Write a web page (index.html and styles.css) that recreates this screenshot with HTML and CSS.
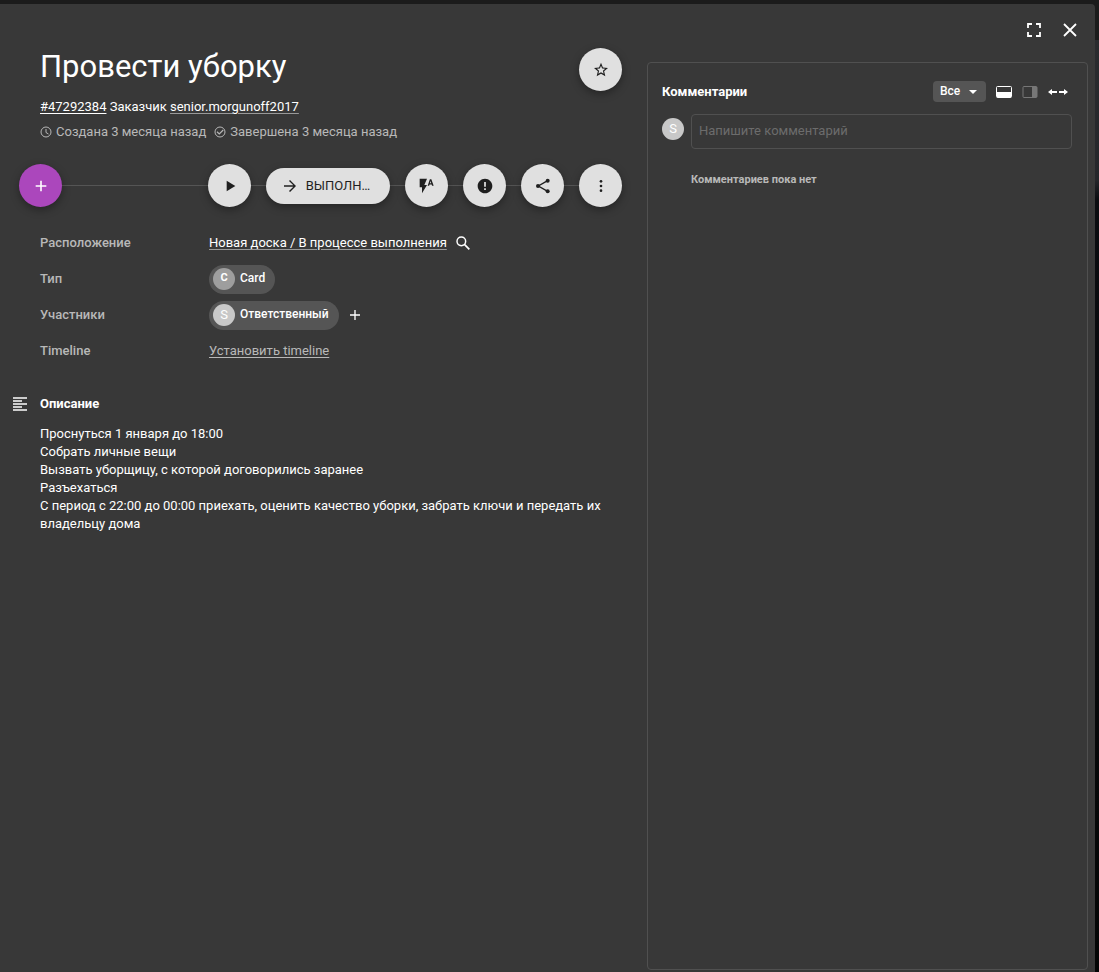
FILE: index.html
```html
<!DOCTYPE html>
<html lang="ru">
<head>
<meta charset="utf-8">
<meta name="viewport" content="width=device-width, initial-scale=1">
<title>Провести уборку</title>
<link rel="stylesheet" href="styles.css">
</head>
<body>
<div class="backdrop">
<div class="dialog" role="dialog" aria-labelledby="card-title">
  <main class="card">
    <header class="card-header">
      <div class="card-heading">
        <h1 class="title" id="card-title">Провести уборку</h1>
        <p class="owner"><a class="link id-link" href="#card">#47292384</a> Заказчик <a class="link" href="#user">senior.morgunoff2017</a></p>
        <p class="dates">
          <span class="date"><svg class="icon-s" viewBox="0 0 24 24"><circle cx="12" cy="12" r="10" fill="none" stroke="currentColor" stroke-width="2"/><path d="M12 6v7l5 3" fill="none" stroke="currentColor" stroke-width="2"/></svg>Создана 3 месяца назад</span>
          <span class="date"><svg class="icon-s" viewBox="0 0 24 24"><circle cx="12" cy="12" r="10" fill="none" stroke="currentColor" stroke-width="2"/><path d="M6 11.500l4.500 4.500L18.500 8" fill="none" stroke="currentColor" stroke-width="2.400"/></svg>Завершена 3 месяца назад</span>
        </p>
      </div>
      <button class="round" type="button" aria-label="В избранное"><svg class="icon" viewBox="0 0 24 24"><path d="M22.500 9l-7.600-.7L12 1.200 9.100 8.300 1.500 9l5.800 5L5.500 21.500 12 17.500l6.500 4L16.700 14 22.500 9zM12 15.200l-3.900 2.400 1-4.500-3.400-3 4.600-.4L12 5.500l1.700 4.200 4.600.4-3.400 3 1 4.500L12 15.200z"/></svg></button>
    </header>

    <div class="actions">
      <button class="round round-add" type="button" aria-label="Добавить"><svg class="icon" viewBox="0 0 24 24"><path d="M20 13.200h-6.800V20h-2.400v-6.800H4v-2.400h6.800V4h2.400v6.800H20z"/></svg></button>
      <span class="spacer"></span>
      <button class="round" type="button" aria-label="Старт"><svg class="icon" viewBox="0 0 24 24"><path d="M7 4v16l13-8z"/></svg></button>
      <button class="pill" type="button"><svg class="icon" viewBox="0 0 24 24"><path d="M12 3l-1.500 1.500L17 11H3v2h14l-6.500 6.500L12 21l9-9z"/></svg><span>Выполн…</span></button>
      <button class="round" type="button" aria-label="Автоматизация"><svg class="icon" viewBox="0 0 24 24"><path d="M1 1v13h3.500v9L12 10.500H8L12 1zm17.500 1h-2.200L13 11.500h2.200l.6-1.900h3.200l.6 1.900H22L18.500 2zm-2.100 5.900l1-3.400 1 3.400h-2z"/></svg></button>
      <button class="round" type="button" aria-label="Заблокировать"><svg class="icon" viewBox="0 0 24 24"><path d="M12 1C5.900 1 1 5.900 1 12s4.900 11 11 11 11-4.900 11-11S18.100 1 12 1zm1.300 17h-2.600v-2.600h2.600V18zm0-5h-2.600V6h2.600v7z"/></svg></button>
      <button class="round" type="button" aria-label="Поделиться"><svg class="icon" viewBox="0 0 24 24"><path d="M19 4L5 12l14 8" fill="none" stroke="currentColor" stroke-width="2"/><circle cx="19" cy="4" r="3"/><circle cx="4.500" cy="12" r="3"/><circle cx="19" cy="20" r="3"/></svg></button>
      <button class="round" type="button" aria-label="Ещё"><svg class="icon" viewBox="0 0 24 24"><circle cx="12" cy="5" r="2"/><circle cx="12" cy="12" r="2"/><circle cx="12" cy="19" r="2"/></svg></button>
    </div>

    <dl class="props">
      <dt>Расположение</dt>
      <dd><a class="link" href="#board">Новая доска / В процессе выполнения</a><button class="plain" type="button" aria-label="Найти на доске"><svg class="icon" viewBox="0 0 24 24"><circle cx="9.500" cy="9.500" r="6.500" fill="none" stroke="currentColor" stroke-width="2.200"/><path d="M14.500 14.500L21.500 21.500" fill="none" stroke="currentColor" stroke-width="2.600"/></svg></button></dd>
      <dt>Тип</dt>
      <dd><button class="chip" type="button"><span class="avatar avatar-type">C</span><span class="chip-text">Card</span></button></dd>
      <dt>Участники</dt>
      <dd><button class="chip" type="button"><span class="avatar">S</span><span class="chip-text">Ответственный</span></button><button class="plain" type="button" aria-label="Добавить участника"><svg class="icon" viewBox="0 0 24 24"><path d="M19.500 13h-6.500v6.500h-2V13H4.500v-2H11V4.500h2V11h6.500z"/></svg></button></dd>
      <dt>Timeline</dt>
      <dd><a class="link timeline-link" href="#timeline">Установить timeline</a></dd>
    </dl>

    <section class="description">
      <svg class="icon lines-icon" viewBox="0 0 16 16"><path d="M1 1h14v2H1zM1 4h9v2H1zM1 7h14v2H1zM1 10h9v2H1zM1 13h14v2H1z"/></svg>
      <h2 class="subtitle">Описание</h2>
      <p class="body-text">Проснуться 1 января до 18:00<br>Собрать личные вещи<br>Вызвать уборщицу, с которой договорились заранее<br>Разъехаться<br>С период с 22:00 до 00:00 приехать, оценить качество уборки, забрать ключи и передать их владельцу дома</p>
    </section>
  </main>

  <aside class="side">
    <div class="window-tools">
      <button class="plain" type="button" aria-label="На весь экран"><svg class="icon-l" viewBox="0 0 20 20"><path d="M4 8V4h4M12 4h4v4M16 12v4h-4M8 16H4v-4" fill="none" stroke="currentColor" stroke-width="1.800"/></svg></button>
      <button class="plain" type="button" aria-label="Закрыть"><svg class="icon-l" viewBox="0 0 20 20"><path d="M4 4l12 12M16 4L4 16" fill="none" stroke="currentColor" stroke-width="1.800"/></svg></button>
    </div>
    <section class="comments">
      <div class="comments-head">
        <h2 class="subtitle">Комментарии</h2>
        <select class="filter" aria-label="Фильтр комментариев"><option>Все</option></select>
        <button class="plain" type="button" aria-label="Панель снизу"><svg class="icon" viewBox="0 0 16 16"><rect x=".5" y="2.500" width="15" height="11" rx="1" fill="none" stroke="currentColor"/><path d="M1 8h14v5.500H1z"/></svg></button>
        <button class="plain plain-dim" type="button" aria-label="Панель справа"><svg class="icon" viewBox="0 0 16 16"><rect x="1" y="2.500" width="14" height="11" rx="1" fill="none" stroke="currentColor"/><path d="M10 3h5v10h-5z"/></svg></button>
        <button class="plain" type="button" aria-label="Изменить ширину"><svg class="icon-l" viewBox="0 0 20 20"><path d="M0 10l4-3v2h5v2H4v2zM20 10l-4-3v2h-5v2h5v2z"/></svg></button>
      </div>
      <div class="composer">
        <span class="avatar">S</span>
        <input class="comment-input" type="text" placeholder="Напишите комментарий" aria-label="Напишите комментарий">
      </div>
      <p class="empty">Комментариев пока нет</p>
    </section>
  </aside>
</div>
</div>
</body>
</html>
```
FILE: styles.css
```css
* {
  box-sizing: border-box;
}

body {
  margin: 0;
  background: #1b1b1b;
  color: #fff;
  font: 400 13px/18px Roboto, sans-serif;
}

h1, h2, p, dl, dd {
  margin: 0;
}

button, input, select {
  font: inherit;
  color: inherit;
}

button {
  display: flex;
  align-items: center;
  justify-content: center;
  padding: 0;
  border: 0;
  background: none;
  cursor: pointer;
}

svg {
  display: block;
  flex: none;
  fill: currentColor;
}

.icon-s { width: 12px; height: 12px; }
.icon { width: 16px; height: 16px; }
.icon-l { width: 20px; height: 20px; }

.backdrop {
  min-height: 100vh;
  display: flex;
  padding: 4px 4px 0 0;
  background: linear-gradient(#1b1b1b 40px, #2a2b2e 40px, #25262a 180px, #0b0c10 200px, #050606);
}

.dialog {
  flex: 1;
  display: grid;
  grid-template-columns: minmax(0, 1fr) minmax(0, 441px);
  column-gap: 25px;
  padding: 0 7px 2px 0;
  border-radius: 0 4px 0 0;
  background: #383838;
}

.card {
  padding: 41px 0 24px 12px;
}

.card-header {
  display: flex;
  justify-content: space-between;
  align-items: flex-start;
  padding: 3px 0 0 28px;
}

.title {
  font-size: 31px;
  font-weight: 400;
  line-height: 38px;
}

.owner {
  margin-top: 12px;
}

.link {
  color: #fff;
  text-decoration: underline;
  text-decoration-color: #999;
  text-underline-offset: 2px;
}

.id-link {
  text-decoration-color: #fff;
}

.dates {
  display: flex;
  gap: 8px;
  margin-top: 7px;
  color: #b8b8b8;
}

.date {
  display: flex;
  align-items: center;
  gap: 4px;
}

.round {
  flex: none;
  width: 43px;
  height: 43px;
  border-radius: 50%;
  background: #e0e0e0;
  color: #1f1f1f;
  box-shadow: 0 3px 8px rgba(0, 0, 0, .35);
}

.round-add {
  background: #ab47bc;
  color: #fff;
}

.actions {
  display: flex;
  align-items: center;
  gap: 15px;
  margin-top: 23px;
  padding-left: 7px;
  background: linear-gradient(#555, #555) center / calc(100% - 48px) 1px no-repeat;
}

.pill {
  gap: 8px;
  min-width: 124px;
  height: 36px;
  padding: 0 18px 0 14px;
  border-radius: 18px;
  background: #e0e0e0;
  color: #1f1f1f;
  text-transform: uppercase;
  white-space: nowrap;
  box-shadow: 0 3px 8px rgba(0, 0, 0, .35);
}

.spacer {
  flex: 1;
}

.props {
  display: grid;
  grid-template-columns: 169px minmax(0, 1fr);
  grid-auto-rows: 36px;
  align-items: center;
  margin-top: 18px;
  padding-left: 28px;
}

.props dt {
  color: #b8b8b8;
  font-weight: 500;
}

.props dd {
  display: flex;
  align-items: center;
  gap: 8px;
}

.timeline-link {
  color: #b8b8b8;
  text-decoration-color: #b8b8b8;
}

.plain-dim {
  color: #777;
}

.chip {
  gap: 5px;
  height: 29px;
  padding: 0 10px 0 4px;
  border-radius: 15px;
  background: #555;
}

.chip-text {
  padding-bottom: 2px;
  font-size: 12px;
  font-weight: 500;
}

.avatar {
  flex: none;
  width: 22px;
  height: 22px;
  border-radius: 50%;
  background: #c8c8c8;
  font-weight: 400;
  line-height: 22px;
  text-align: center;
}

.avatar-type {
  background: #9e9e9e;
  font-size: 11px;
  font-weight: 700;
  line-height: 20px;
}

.description {
  display: grid;
  grid-template-columns: 16px minmax(0, 1fr);
  gap: 12px;
  align-items: center;
  margin-top: 26px;
}

.lines-icon {
  color: #ccc;
}

.subtitle {
  font-size: 13px;
  font-weight: 700;
  line-height: 18px;
}

.body-text {
  grid-column: 2;
}

.side {
  display: flex;
  flex-direction: column;
}

.window-tools {
  display: flex;
  justify-content: flex-end;
  align-items: center;
  gap: 16px;
  height: 52px;
  padding-right: 8px;
}

.comments {
  flex: 1;
  margin-top: 6px;
  padding: 18px 15px 18px 14px;
  border: 1px solid #505050;
  border-radius: 4px;
}

.comments-head {
  display: flex;
  align-items: center;
  gap: 10px;
  padding-right: 4px;
}

.comments-head .subtitle {
  flex: 1;
}

.filter {
  width: 53px;
  height: 21px;
  padding: 0 0 1px 7px;
  border: 0;
  border-radius: 4px;
  appearance: none;
  background: url("data:image/svg+xml,%3Csvg xmlns='http://www.w3.org/2000/svg' viewBox='0 0 8 4'%3E%3Cpath d='M0 0h8L4 4z' fill='%23fff'/%3E%3C/svg%3E") right 9px top 9px / 8px 4px no-repeat #555;
  font-size: 12px;
  font-weight: 500;
}

.composer {
  display: flex;
  align-items: flex-start;
  gap: 7px;
  margin-top: 12px;
}

.composer .avatar {
  margin-top: 4px;
}

.comment-input {
  flex: 1;
  min-width: 0;
  height: 35px;
  padding: 0 7px 2px;
  border: 1px solid #505050;
  border-radius: 4px;
  background: transparent;
}

.comment-input::placeholder {
  color: #6c6c6c;
}

.empty {
  margin: 22px 0 0 29px;
  color: #b8b8b8;
  font-size: 11px;
  font-weight: 700;
}
```
